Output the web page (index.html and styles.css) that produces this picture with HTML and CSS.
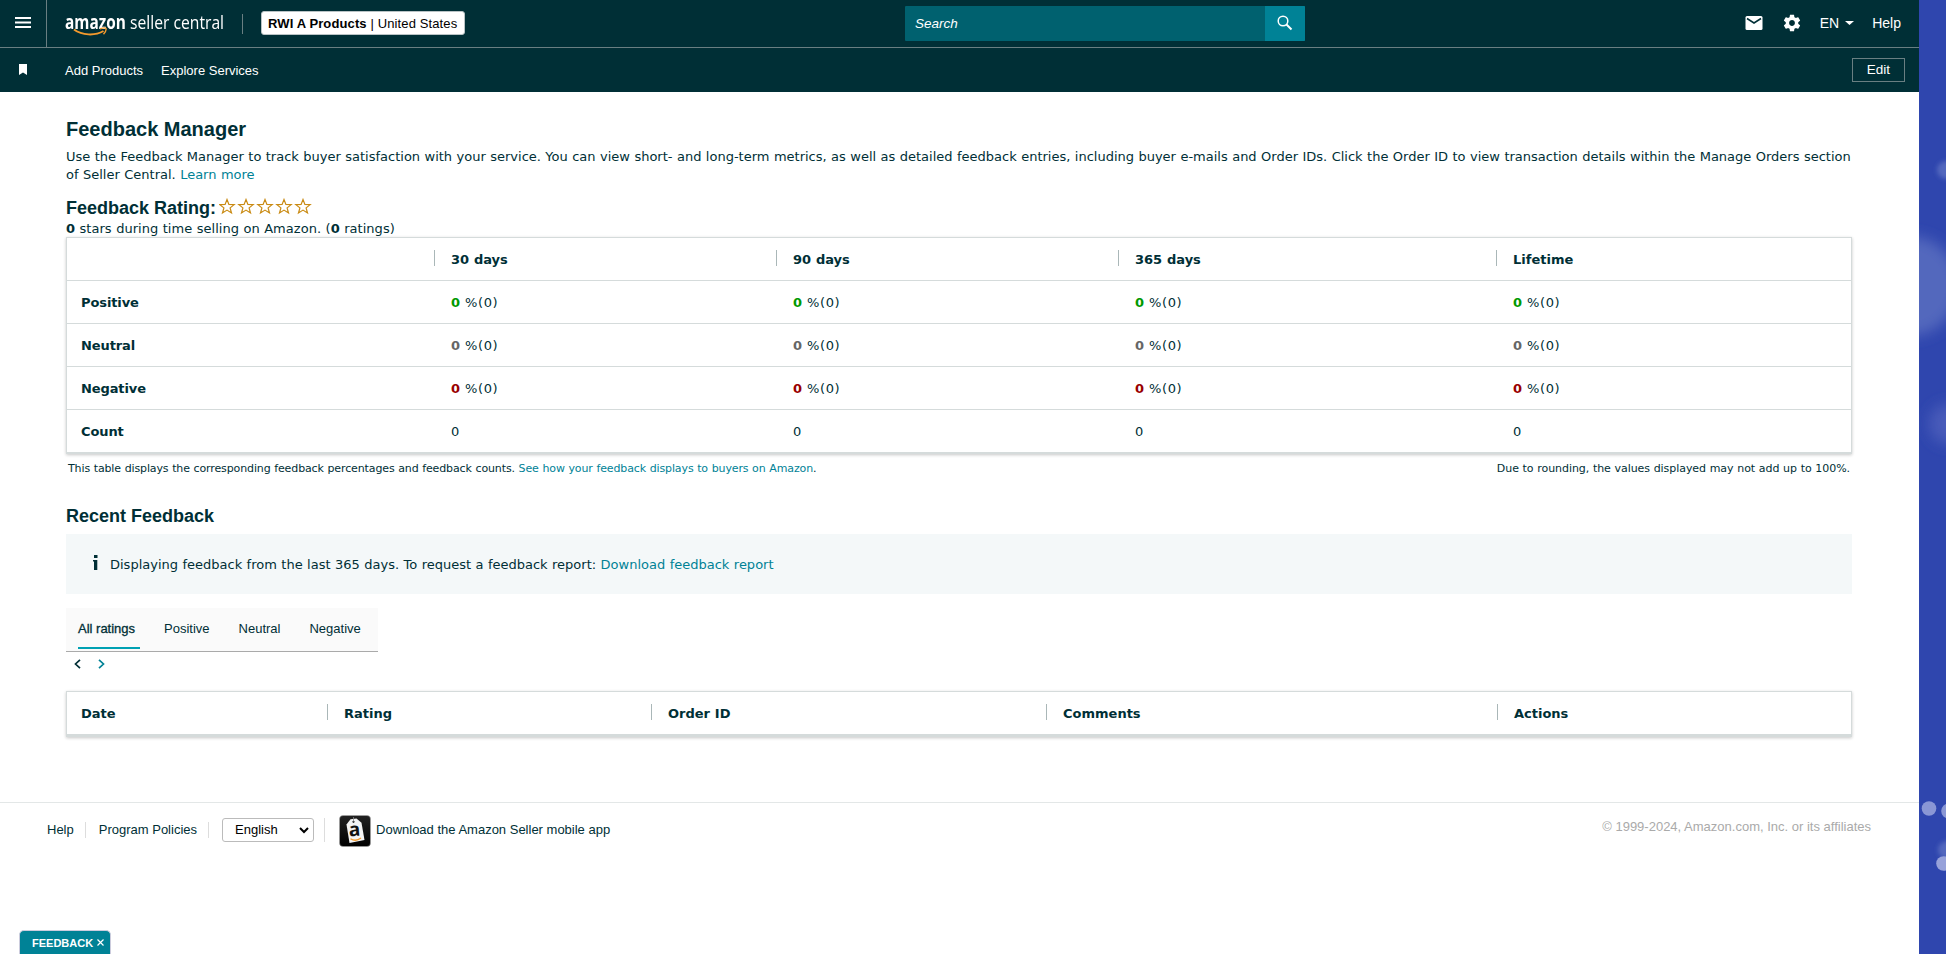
FILE: index.html
```html
<!DOCTYPE html>
<html lang="en">
<head>
<meta charset="utf-8">
<title>Feedback Manager</title>
<link rel="stylesheet" href="styles.css">
</head>
<body>
<div class="page">
  <header class="topbar">
    <div class="menu"><svg width="16" height="12" viewBox="0 0 16 12"><path d="M0 1h16M0 5.500h16M0 10h16" stroke="#fff" stroke-width="1.800"/></svg></div>
    <div class="logo">
      <div class="logo-amazon"><span>amazon</span></div>
      <div class="logo-seller"><span>seller central</span></div>
      <svg class="smile" width="36" height="10" viewBox="0 0 36 10" fill="none" stroke="#f39a2d"><path d="M1 2.500C9 8.500 22 9 30.500 4" stroke-width="2"/><path d="M27 1.800C30 .8 32.500 .8 33 1.500C33.400 2.700 32 5.500 30.500 7.200" stroke-width="1.400"/></svg>
    </div>
    <span class="logo-rule"></span>
    <div class="account"><b>RWI A Products</b>&nbsp;|&nbsp;United States</div>
    <div class="search"><span class="search-input">Search</span><span class="search-btn"><svg width="16" height="16" viewBox="0 0 16 16" fill="none" stroke="#fff"><circle cx="6" cy="6" r="4.800" stroke-width="1.500"/><path d="M9.500 9.500l5 5" stroke-width="2"/></svg></span></div>
    <div class="tools">
      <svg class="mail" width="18" height="14" viewBox="0 0 18 14"><rect x=".5" width="17" height="14" rx="1.500" fill="#fff"/><path d="M2 2.500l7 4.500 7-4.500" fill="none" stroke="#002f36" stroke-width="1.500"/></svg>
      <svg class="gear" width="20" height="20" viewBox="0 0 24 24"><path fill="#fff" d="M19.430 12.980c.04-.32.07-.64.07-.98s-.03-.66-.07-.98l2.110-1.650c.19-.15.24-.42.12-.64l-2-3.460c-.12-.22-.39-.3-.61-.22l-2.490 1c-.52-.4-1.080-.73-1.690-.98l-.38-2.650C14.460 2.180 14.250 2 14 2h-4c-.25 0-.46.18-.49.42l-.38 2.650c-.61.25-1.170.59-1.690.98l-2.490-1c-.23-.09-.49 0-.61.22l-2 3.460c-.13.22-.07.49.12.64l2.110 1.650c-.04.32-.07.65-.07.98s.03.66.07.98l-2.110 1.650c-.19.15-.24.42-.12.64l2 3.460c.12.22.39.3.61.22l2.490-1c.52.4 1.080.73 1.690.98l.38 2.650c.03.24.24.42.49.42h4c.25 0 .46-.18.49-.42l.38-2.650c.61-.25 1.170-.59 1.690-.98l2.490 1c.23.09.49 0 .61-.22l2-3.460c.12-.22.07-.49-.12-.64l-2.110-1.650zM12 15.500c-1.930 0-3.500-1.570-3.500-3.500s1.570-3.500 3.500-3.500 3.500 1.570 3.500 3.500-1.570 3.500-3.500 3.500z"/></svg>
      <span class="lang">EN</span>
      <svg class="caret" width="9" height="4" viewBox="0 0 9 4"><path d="M0 0h9L4.500 4z" fill="#fff"/></svg>
      <span>Help</span>
    </div>
  </header>
  <nav class="favbar">
    <svg class="bookmark" width="8" height="11" viewBox="0 0 8 11"><path d="M0 0h8v11L4 8.500 0 11z" fill="#fff"/></svg>
    <span class="fav-add">Add Products</span><span>Explore Services</span>
    <span class="edit">Edit</span>
  </nav>

  <main class="content">
    <h1>Feedback Manager</h1>
    <p class="intro">Use the Feedback Manager to track buyer satisfaction with your service. You can view short- and long-term metrics, as well as detailed feedback entries, including buyer e-mails and Order IDs. Click the Order ID to view transaction details within the Manage Orders section<br>of Seller Central. <a>Learn more</a></p>
    <div class="rating">
      <h2>Feedback Rating:</h2>
      <svg class="stars" width="95" height="18" viewBox="0 0 95 18" fill="#fff" stroke="#c98a12" stroke-width="1.200">
        <defs><path id="star" d="M8 1.500l1.900 4.900 5.300.2-4.100 3.300 1.400 5.100L8 12.100 3.500 15l1.400-5.100L.8 6.600l5.300-.2z"/></defs>
        <use href="#star"/><use href="#star" x="19"/><use href="#star" x="38"/><use href="#star" x="57"/><use href="#star" x="76"/>
      </svg>
    </div>
    <p class="summary"><b>0</b> stars during time selling on Amazon. (<b>0</b> ratings)</p>

    <div class="table metrics">
      <div class="row head"><span></span><span>30 days</span><span>90 days</span><span>365 days</span><span>Lifetime</span></div>
      <div class="row pos"><b>Positive</b><span><i>0</i> %(0)</span><span><i>0</i> %(0)</span><span><i>0</i> %(0)</span><span><i>0</i> %(0)</span></div>
      <div class="row neu"><b>Neutral</b><span><i>0</i> %(0)</span><span><i>0</i> %(0)</span><span><i>0</i> %(0)</span><span><i>0</i> %(0)</span></div>
      <div class="row neg"><b>Negative</b><span><i>0</i> %(0)</span><span><i>0</i> %(0)</span><span><i>0</i> %(0)</span><span><i>0</i> %(0)</span></div>
      <div class="row"><b>Count</b><span>0</span><span>0</span><span>0</span><span>0</span></div>
    </div>
    <div class="notes"><span class="note-left">This table displays the corresponding feedback percentages and feedback counts. <a>See how your feedback displays to buyers on Amazon</a>.</span><span>Due to rounding, the values displayed may not add up to 100%.</span></div>

    <h2 class="recent">Recent Feedback</h2>
    <div class="info"><svg width="5" height="15" viewBox="0 0 5 15" fill="#002f36"><rect x="1" width="3.500" height="3"/><path d="M0 5h4.300v10H1V6.500H0z"/></svg><span>Displaying feedback from the last 365 days. To request a feedback report: <a>Download feedback report</a></span></div>
    <div class="tabs"><span class="tab active">All ratings</span><span class="tab">Positive</span><span class="tab">Neutral</span><span class="tab">Negative</span></div>
    <div class="pager">
      <svg width="7" height="10" viewBox="0 0 7 10"><path d="M6 .8L1.500 5 6 9.200" fill="none" stroke="#002f36" stroke-width="1.700"/></svg>
      <svg width="7" height="10" viewBox="0 0 7 10"><path d="M1 .8L5.500 5 1 9.200" fill="none" stroke="#008296" stroke-width="1.700"/></svg>
    </div>
    <div class="table entries"><div class="row head"><span>Date</span><span>Rating</span><span>Order ID</span><span>Comments</span><span>Actions</span></div></div>
  </main>

  <footer class="footer">
    <span class="f-help">Help</span><span class="f-policies">Program Policies</span>
    <span class="f-select"><span class="select">English<svg width="10" height="7" viewBox="0 0 10 7"><path d="M1 1l4 4 4-4" fill="none" stroke="#000" stroke-width="2"/></svg></span></span>
    <svg class="app" width="32" height="32" viewBox="0 0 32 32">
      <defs><linearGradient id="dark" x2="0" y2="1"><stop stop-color="#222"/><stop offset="1" stop-color="#000"/></linearGradient></defs>
      <rect x=".5" y=".5" width="31" height="31" rx="3.500" fill="url(#dark)" stroke="#aaa" stroke-width=".5"/>
      <path d="M7.500 9.500l4-5.300 6-.7 5 4.200L25.500 25l-15 3z" fill="#f4f4f4"/>
      <circle cx="14.500" cy="6.800" r="1.100" fill="#222"/>
      <path d="M14.500 6.500V2" stroke="#888" stroke-width=".8"/>
      <text class="app-a" x="10" y="21" transform="rotate(-5 15 18)">a</text>
      <path d="M11.500 23.800c3.500 2.200 7.500 1.500 10.500-.8" fill="none" stroke="#f39a2d" stroke-width="1.300"/>
    </svg>
    <span class="f-app">Download the Amazon Seller mobile app</span>
    <span class="copy">© 1999-2024, Amazon.com, Inc. or its affiliates</span>
  </footer>
  <div class="feedback">FEEDBACK<svg width="7" height="7" viewBox="0 0 7 7"><path d="M.5.5l6 6M6.500.5l-6 6" stroke="#fff" stroke-width="1.200"/></svg></div>
</div>
<svg class="desktop" width="27" height="954" viewBox="0 0 27 954">
  <defs>
    <filter id="soft" x="-50%" y="-50%" width="200%" height="200%"><feGaussianBlur stdDeviation="7"/></filter>
    <filter id="edge" x="-50%" y="-50%" width="200%" height="200%"><feGaussianBlur stdDeviation="2"/></filter>
  </defs>
  <rect width="27" height="954" fill="#2f46ae"/>
  <circle cx="-10" cy="286" r="50" fill="#5367bd" filter="url(#soft)"/>
  <circle cx="30" cy="424" r="20" fill="#485cba" filter="url(#soft)"/>
  <circle cx="27" cy="170" r="9" fill="#5367be" filter="url(#edge)"/>
  <circle cx="28" cy="850" r="9" fill="#5367be" filter="url(#edge)"/>
  <circle cx="10" cy="808.500" r="7.300" fill="#8a97d5"/>
  <circle cx="29.500" cy="811" r="7.300" fill="#8a97d5"/>
  <circle cx="24.500" cy="863.500" r="7.300" fill="#97a2da"/>
</svg>
</body>
</html>
```
FILE: styles.css
```css
* { box-sizing: border-box; }
body { margin: 0; display: flex; width: 1946px; height: 954px; overflow: hidden; background: #fff; color: #002f36; font: 13px/18px "DejaVu Sans", sans-serif; }
h1, h2, p { margin: 0; }
svg { display: block; flex: none; }
a { color: #008296; }
.page { width: 1919px; height: 954px; display: flex; flex-direction: column; }
.desktop { flex: none; }

.topbar { height: 48px; flex: none; display: flex; align-items: center; background: #002f36; border-bottom: 1px solid #697f82; color: #fff; font: 14px/16px "Liberation Sans", sans-serif; }
.menu { width: 47px; height: 47px; padding: 17px 0 0 15px; border-right: 1px solid #697f82; }
.logo { position: relative; display: flex; width: 162px; height: 30px; margin-left: 18px; font: 19px/26px "Open Sans", sans-serif; white-space: nowrap; }
.logo span { display: inline-block; transform-origin: 0 0; }
.logo-amazon { width: 65px; font-weight: 700; }
.logo-amazon span { transform: scaleX(.81); }
.logo-seller { width: 96px; }
.logo-seller span { transform: scaleX(.825); }
.smile { position: absolute; left: 8px; top: 18px; }
.logo-rule { width: 1px; height: 20px; margin-left: 15px; background: #697f82; }
.account { width: 204px; height: 24px; margin-left: 18px; margin-top: -1px; padding: 0 6px; border: 1px solid #b9c3c5; border-radius: 3px; background: #fff; color: #000; font-size: 13px; letter-spacing: .12px; line-height: 23px; white-space: nowrap; }
.search { width: 400px; height: 35px; margin-left: 440px; display: flex; background: #00616f; border-radius: 1px; overflow: hidden; }
.search-input { flex: 1; padding-left: 10px; font-size: 13.500px; font-style: italic; line-height: 35px; }
.search-btn { width: 40px; padding: 9px 0 0 12px; background: #008296; }
.tools { margin-left: auto; margin-top: -2px; padding-right: 18px; display: flex; align-items: center; }
.gear { margin-left: 19px; }
.lang { margin-left: 18px; }
.caret { margin: 0 18px 0 6px; }

.favbar { height: 44px; flex: none; display: flex; align-items: center; padding-right: 14px; background: #002f36; color: #fff; font: 13px/16px "Liberation Sans", sans-serif; }
.favbar > span { margin-top: 2px; }
.bookmark { margin: -2px 38px 0 19px; }
.fav-add { margin-right: 18px; }
.favbar > .edit { width: 53px; height: 24px; margin-left: auto; margin-top: 0; border: 1px solid #697f82; text-align: center; font-size: 13.500px; line-height: 21px; }

.content { width: 1786px; margin-left: 66px; word-spacing: .31px; }
h1 { margin-top: 25px; font: bold 20px/24px "Liberation Sans", sans-serif; }
h2 { font: bold 18px/24px "Liberation Sans", sans-serif; }
h1, h2 { word-spacing: 0; }
.intro { margin-top: 7px; white-space: nowrap; }
.rating { display: flex; margin-top: 12px; height: 24px; }
.stars { margin: 2px 0 0 3px; }
.summary { height: 17px; letter-spacing: .03px; }
.table { border: 1px solid #d5dbdb; border-bottom-width: 2px; background: #fff; box-shadow: 0 1px 3px rgba(0, 0, 0, .22); }
.row { display: grid; height: 43px; padding: 1px 0 0 14px; line-height: 42px; border-bottom: 1px solid #d5dbdb; }
.metrics .row { grid-template-columns: 370px 342px 342px 378px 1fr; }
.metrics .row:last-child { height: 42px; border: 0; }
.row b { letter-spacing: -.1px; }
.row > span:not(:empty) { letter-spacing: .6px; }
.row i { font-style: normal; font-weight: bold; letter-spacing: 0; }
.pos i { color: #090; }
.neu i { color: #666; }
.neg i { color: #900; }
.head { font-weight: bold; }
.head > span:not(:empty) { letter-spacing: 0; }
.head span { position: relative; }
.head span + span::before { content: ""; position: absolute; left: -17px; top: 11px; width: 1px; height: 16px; background: #aab7b8; }
.entries { margin-top: 22px; }
.entries .row { grid-template-columns: 263px 324px 395px 451px 1fr; }
.notes { display: flex; justify-content: space-between; padding: 0 2px; margin-top: 6px; font-size: 11px; line-height: 18px; letter-spacing: -.06px; }
.note-left { letter-spacing: -.12px; }
.recent { margin-top: 26px; }
.info { margin-top: 6px; height: 60px; display: flex; padding: 21px 27px; gap: 12px; line-height: 19px; background: #f4f8f9; }
.tabs { width: 312px; height: 44px; margin-top: 14px; padding-left: 12px; display: flex; background: #fafafa; border-bottom: 1px solid #aaa; font: 13px/41px "Liberation Sans", sans-serif; word-spacing: 0; }
.tab { flex: none; height: 41px; margin-right: 29px; }
.active { width: 62px; margin-right: 24px; border-bottom: 2px solid #00a1b3; -webkit-text-stroke: .3px #002f36; }
.pager { display: flex; gap: 17px; padding: 7px 0 0 8px; }

.footer { margin-top: 65px; height: 60px; display: flex; align-items: flex-start; border-top: 1px solid #e3e7e7; font: 13px/16px "Liberation Sans", sans-serif; padding: 11px 48px 0 47px; }
.f-help, .f-policies, .f-select { border-right: 1px solid #ddd; }
.footer > span { margin-top: 8px; white-space: nowrap; }
.f-help { padding-right: 11px; margin-right: 13px; }
.f-policies { padding-right: 11px; margin-right: 13px; }
.footer > .f-select { margin-top: 4px; padding-right: 10px; margin-right: 14px; }
.select { display: flex; justify-content: space-between; align-items: center; width: 92px; height: 24px; padding: 0 4px 0 12px; border: 1px solid #bbb; border-radius: 3px; color: #000; font-size: 13px; }
.app { margin-top: 1px; }
.app-a { font: bold 19px "Open Sans", sans-serif; fill: #111; }
.f-app { margin-left: 5px; }
.footer > .copy { margin-left: auto; margin-top: 5px; color: #aaa; }
.feedback { width: 92px; height: 24px; margin: auto 0 0 19px; display: flex; align-items: center; gap: 4px; padding-left: 12px; background: #008296; color: #fff; border: 1px solid #ccd; border-bottom: 0; border-radius: 5px 5px 0 0; font: bold 11px/24px "Liberation Sans", sans-serif; }
```
